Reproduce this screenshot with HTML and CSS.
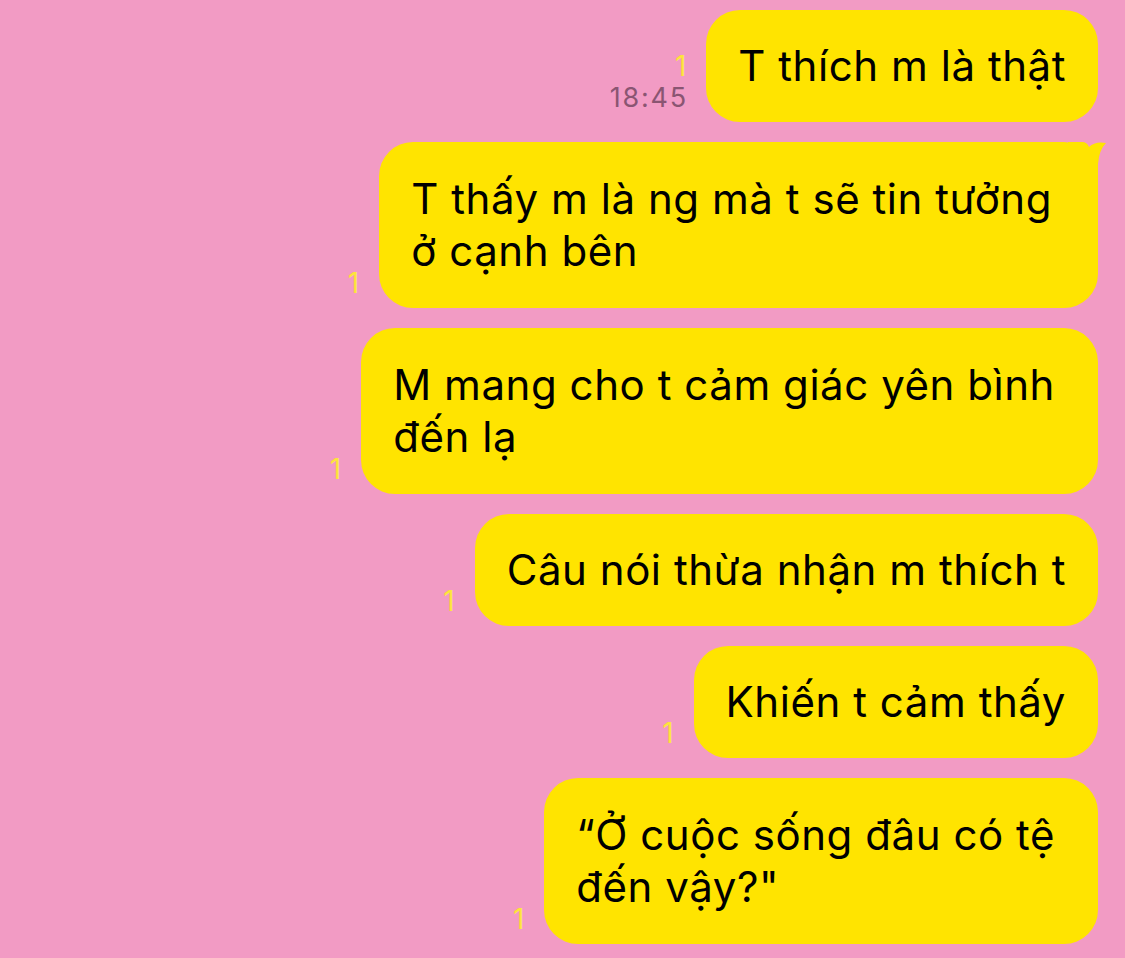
FILE: index.html
```html
<!DOCTYPE html>
<html lang="vi">
<head>
<meta charset="utf-8">
<link rel="stylesheet" href="styles.css">
</head>
<body>
<div class="chat">
  <div class="row">
    <div class="meta"><span class="read">1</span><span class="time">18:45</span></div>
    <div class="bubble">T thích m là thật</div>
  </div>
  <div class="row">
    <div class="meta"><span class="read">1</span></div>
    <div class="bubble multi tailed">T thấy m là ng mà t sẽ tin tưởng<br>ở cạnh bên
      <svg class="tail" width="40" height="40" viewBox="0 0 40 40"><path d="M0 0 H14 Q19 0 21 5 Q27 -1 38 1 Q31 8 30 22 V40 H0 Z" fill="#ffe400"/></svg>
    </div>
  </div>
  <div class="row">
    <div class="meta"><span class="read">1</span></div>
    <div class="bubble multi">M mang cho t cảm giác yên bình<br>đến lạ</div>
  </div>
  <div class="row">
    <div class="meta"><span class="read">1</span></div>
    <div class="bubble">Câu nói thừa nhận m thích t</div>
  </div>
  <div class="row">
    <div class="meta"><span class="read">1</span></div>
    <div class="bubble">Khiến t cảm thấy</div>
  </div>
  <div class="row">
    <div class="meta"><span class="read">1</span></div>
    <div class="bubble multi">“Ở cuộc sống đâu có tệ<br>đến vậy?"</div>
  </div>
</div>
</body>
</html>
```

FILE: styles.css
```css
html, body {
  margin: 0;
  padding: 0;
  background: #f29bc4;
}
body {
  width: 1125px;
  height: 958px;
  overflow: hidden;
  font-family: Inter, "Noto Sans", sans-serif;
}
.chat {
  display: flex;
  flex-direction: column;
  align-items: flex-end;
  gap: 20px;
  padding: 10px 27px 0 0;
}
.row {
  display: flex;
  align-items: flex-end;
  gap: 20px;
}
.meta {
  display: flex;
  flex-direction: column;
  align-items: flex-end;
  padding-bottom: 9px;
  font-size: 27px;
  line-height: 31px;
}
.read {
  color: #fde43c;
  font-size: 28px;
}
.time {
  color: #8a5572;
  letter-spacing: 1.8px;
  margin-right: -1.8px;
}
.bubble {
  position: relative;
  background: #ffe400;
  color: #000;
  font-size: 42px;
  line-height: 52px;
  letter-spacing: 0.55px;
  padding: 30px 32px;
  border-radius: 34px;
  white-space: nowrap;
}
.bubble.multi {
  padding: 31px 43px 31px 32px;
}
.bubble.tailed {
  padding-right: 46px;
}
.tail {
  position: absolute;
  top: 0;
  right: -10px;
}
```
